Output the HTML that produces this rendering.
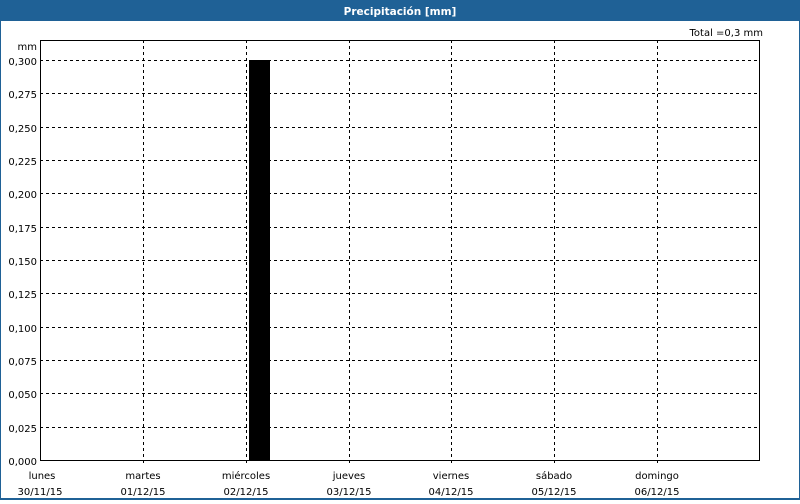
<!DOCTYPE html>
<html><head><style>
body{margin:0;width:800px;height:500px;overflow:hidden;background:#fff;font-family:"DejaVu Sans","Liberation Sans",sans-serif}
</style></head><body>
<svg width="800" height="500" xmlns="http://www.w3.org/2000/svg" font-family="DejaVu Sans, Liberation Sans, sans-serif" font-size="10">
<rect x="0" y="0" width="800" height="500" fill="#1f6196"/>
<rect x="1" y="21" width="798" height="477" fill="#fff"/>
<text x="400" y="15" fill="#fff" font-weight="bold" text-anchor="middle" font-size="10.5">Precipitación [mm]</text>
<text x="763" y="36" text-anchor="end" fill="#000">Total =0,3 mm</text>
<text x="37" y="50" text-anchor="end">mm</text>
<g stroke="#000" stroke-dasharray="3,3" stroke-width="1">
<line x1="40" x2="760" y1="60.5" y2="60.5"/><line x1="40" x2="760" y1="93.5" y2="93.5"/><line x1="40" x2="760" y1="127.5" y2="127.5"/><line x1="40" x2="760" y1="160.5" y2="160.5"/><line x1="40" x2="760" y1="193.5" y2="193.5"/><line x1="40" x2="760" y1="227.5" y2="227.5"/><line x1="40" x2="760" y1="260.5" y2="260.5"/><line x1="40" x2="760" y1="293.5" y2="293.5"/><line x1="40" x2="760" y1="327.5" y2="327.5"/><line x1="40" x2="760" y1="360.5" y2="360.5"/><line x1="40" x2="760" y1="393.5" y2="393.5"/><line x1="40" x2="760" y1="427.5" y2="427.5"/>
<line x1="143.5" x2="143.5" y1="40" y2="466"/><line x1="246.5" x2="246.5" y1="40" y2="466"/><line x1="349.5" x2="349.5" y1="40" y2="466"/><line x1="451.5" x2="451.5" y1="40" y2="466"/><line x1="554.5" x2="554.5" y1="40" y2="466"/><line x1="657.5" x2="657.5" y1="40" y2="466"/>
</g>
<rect x="249" y="60" width="21" height="401" fill="#000"/>
<rect x="40.5" y="40.5" width="719" height="420" fill="none" stroke="#000"/>
<g text-anchor="end">
<text x="37" y="65">0,300</text><text x="37" y="98">0,275</text><text x="37" y="132">0,250</text><text x="37" y="165">0,225</text><text x="37" y="198">0,200</text><text x="37" y="232">0,175</text><text x="37" y="265">0,150</text><text x="37" y="298">0,125</text><text x="37" y="332">0,100</text><text x="37" y="365">0,075</text><text x="37" y="398">0,050</text><text x="37" y="432">0,025</text><text x="37" y="465">0,000</text>
</g>
<g text-anchor="middle">
<text x="42" y="479">lunes</text><text x="40" y="495">30/11/15</text>
<text x="143" y="479">martes</text><text x="143" y="495">01/12/15</text>
<text x="246" y="479">miércoles</text><text x="246" y="495">02/12/15</text>
<text x="349" y="479">jueves</text><text x="349" y="495">03/12/15</text>
<text x="451" y="479">viernes</text><text x="451" y="495">04/12/15</text>
<text x="554" y="479">sábado</text><text x="554" y="495">05/12/15</text>
<text x="657" y="479">domingo</text><text x="657" y="495">06/12/15</text>
</g>
</svg>
</body></html>
